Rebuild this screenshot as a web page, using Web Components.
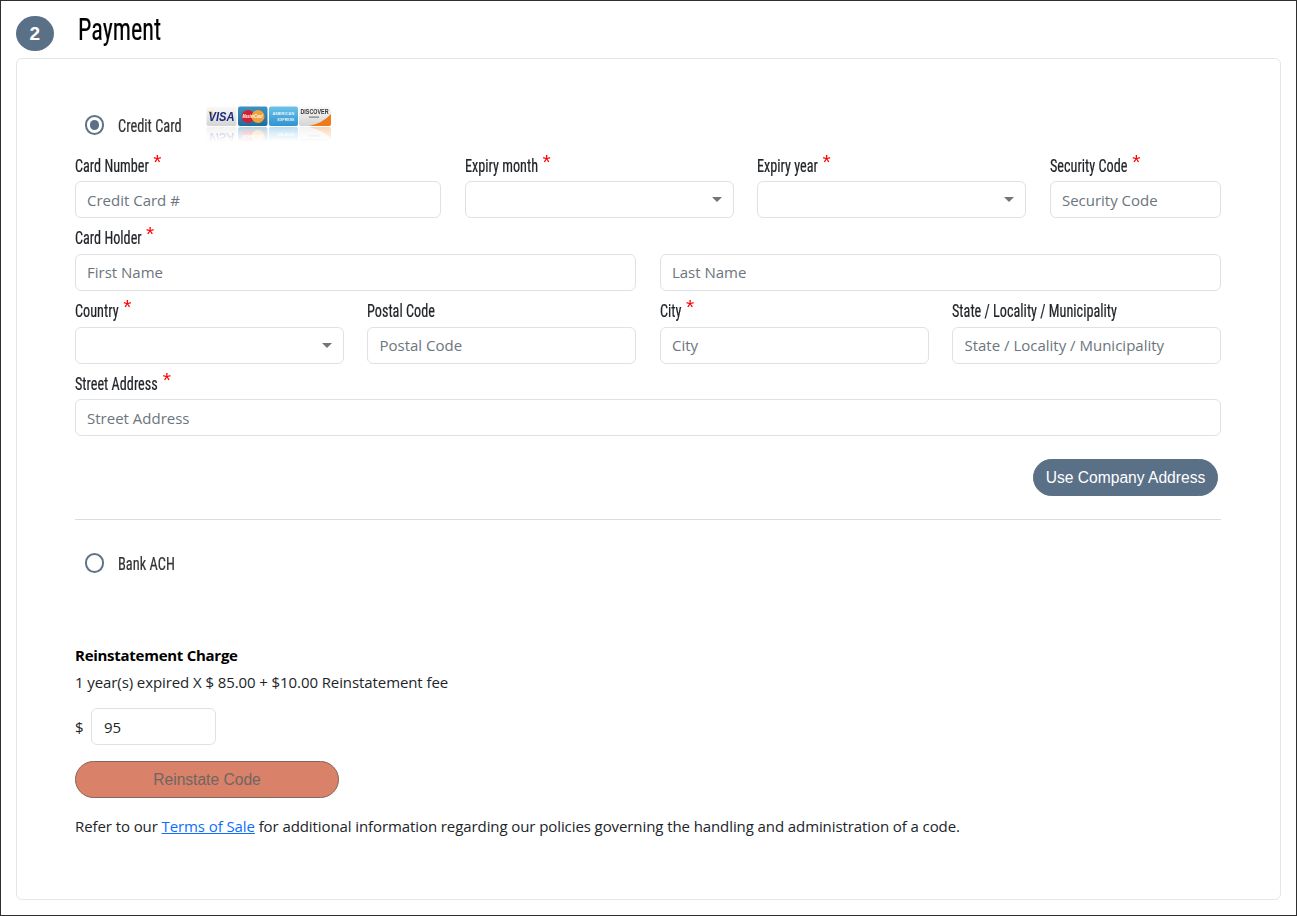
<!DOCTYPE html>
<html lang="en">
<head>
<meta charset="utf-8">
<title>Payment</title>
<style>
html,body{margin:0;padding:0;background:#fff}
body{width:1297px;height:916px;box-sizing:border-box;border:1px solid #2f2f2f;overflow:hidden;font-family:"Open Sans","Noto Sans",sans-serif;color:#212529}
</style>
</head>
<body>
<pay-section number="2" heading="Payment">
  <pay-option label="Credit Card" checked>
    <card-logos></card-logos>
  </pay-option>
  <field-grid>
    <form-field style="grid-column:span 4" label="Card Number" required placeholder="Credit Card #"></form-field>
    <form-field style="grid-column:span 3" label="Expiry month" required select></form-field>
    <form-field style="grid-column:span 3" label="Expiry year" required select></form-field>
    <form-field style="grid-column:span 2" label="Security Code" required placeholder="Security Code"></form-field>
    <form-field style="grid-column:span 6" label="Card Holder" required placeholder="First Name"></form-field>
    <form-field style="grid-column:span 6" nolabel placeholder="Last Name"></form-field>
    <form-field style="grid-column:span 3" label="Country" required select></form-field>
    <form-field style="grid-column:span 3" label="Postal Code" placeholder="Postal Code"></form-field>
    <form-field style="grid-column:span 3" label="City" required placeholder="City"></form-field>
    <form-field style="grid-column:span 3" label="State / Locality / Municipality" placeholder="State / Locality / Municipality"></form-field>
    <form-field style="grid-column:span 12" label="Street Address" required placeholder="Street Address"></form-field>
  </field-grid>
  <address-action><pill-button>Use Company Address</pill-button></address-action>
  <pay-option label="Bank ACH" class="ach"></pay-option>
  <reinstate-summary></reinstate-summary>
</pay-section>
<script>
function def(name, css, html, init){
  customElements.define(name, class extends HTMLElement{
    constructor(){super();const r=this.attachShadow({mode:'open'});r.innerHTML='<style>'+css+'</style>'+(typeof html==='function'?html(this):html);}
    connectedCallback(){
      if(this._done)return;this._done=true;
      if(typeof init==='function')init(this,this.shadowRoot);
    }
  });
}
const COND='"Roboto Condensed","Liberation Sans",sans-serif';
const BODY='"Open Sans","Noto Sans",sans-serif';
const NARROW='display:inline-block;transform-origin:0 50%;white-space:nowrap;-webkit-text-stroke:.2px currentColor;';

def('pay-section',`
:host{display:block;padding:0 15px 0 15px;box-sizing:border-box}
header{display:flex;align-items:flex-start;height:57px}
.badge{width:37.5px;height:35px;margin-top:15px;border-radius:50%;background:#5a7087;color:#fff;display:flex;align-items:center;justify-content:center;font:700 19px "Liberation Sans",sans-serif;flex:none}
h2{margin:10px 0 0 24.500px;font:400 31px/38px ${COND};color:#000}
h2 span{${NARROW}transform:scaleX(.78)}
.card{height:842px;box-sizing:border-box;border:1px solid #e6e6e6;border-radius:6px;padding:0 59px 0 58px}
`,`<header><div class="badge"></div><h2><span></span></h2></header><div class="card"><slot></slot></div>`,
(el,r)=>{r.querySelector('.badge').textContent=el.getAttribute('number');r.querySelector('h2 span').textContent=el.getAttribute('heading');});

def('pay-option',`
:host{display:flex;align-items:center;height:38px;padding-left:9.500px;position:relative}
:host(.ach){margin-top:24px}
:host(:not(.ach)){margin-top:47px}
.radio{width:19.500px;height:19.500px;box-sizing:border-box;border-radius:50%;border:2px solid #5f7388;display:flex;align-items:center;justify-content:center;flex:none}
.dot{width:9.500px;height:9.500px;border-radius:50%;background:#5a7087;display:none}
:host([checked]) .dot{display:block}
label{margin-left:14px;width:65px;padding-top:1px;font:400 18px/22px ${COND};color:#333;flex:none}
label span{${NARROW}transform:scaleX(.8)}
`,`<div class="radio"><div class="dot"></div></div><label><span></span></label><slot></slot>`,
(el,r)=>{r.querySelector('label span').textContent=el.getAttribute('label');});

def('card-logos',`
:host{display:block;margin-left:23px;align-self:flex-start;width:126px;height:36px}
svg{display:block;filter:blur(.35px)}
text{font-family:"Liberation Sans",sans-serif}
`,`<svg width="126" height="36" viewBox="0 0 126 36" aria-label="Accepted cards">
<defs>
<linearGradient id="g1" x1="0" y1="0" x2="0" y2="1"><stop offset="0" stop-color="#fafafa"/><stop offset="1" stop-color="#d4d4d4"/></linearGradient>
<linearGradient id="g2" x1="0" y1="0" x2="0" y2="1"><stop offset="0" stop-color="#3f93c0"/><stop offset="1" stop-color="#1d6c9f"/></linearGradient>
<linearGradient id="g3" x1="0" y1="0" x2="0" y2="1"><stop offset="0" stop-color="#6cc3ea"/><stop offset="1" stop-color="#2f94d0"/></linearGradient>
<linearGradient id="fade" x1="0" y1="0" x2="0" y2="1"><stop offset="0" stop-color="#fff" stop-opacity=".34"/><stop offset="1" stop-color="#fff" stop-opacity="0"/></linearGradient>
<mask id="m"><rect x="0" y="20" width="126" height="16" fill="url(#fade)"/></mask>
<g id="cards">
  <rect x="0.5" y="0.5" width="30" height="19.500" rx="2" fill="url(#g1)"/>
  <path d="M2 5.500 L6 5.500 L7 10 Z" fill="#e8a02a"/>
  <text x="15.500" y="14.500" text-anchor="middle" font-size="12.500" font-weight="700" font-style="italic" fill="#1a2a78" textLength="26" lengthAdjust="spacingAndGlyphs">VISA</text>
  <rect x="32" y="0.5" width="29.500" height="19.500" rx="2" fill="url(#g2)"/>
  <circle cx="42" cy="10.500" r="6.500" fill="#d2202c"/><circle cx="52" cy="10.500" r="6.500" fill="#f2a23a"/>
  <text x="46.500" y="12" text-anchor="middle" font-size="4.500" font-weight="700" font-style="italic" fill="#fff" textLength="20" lengthAdjust="spacingAndGlyphs">MasterCard</text>
  <rect x="63" y="0.5" width="29" height="19.500" rx="2" fill="url(#g3)"/>
  <text x="77.500" y="8.500" text-anchor="middle" font-size="4" font-weight="700" fill="#e8f6fc" textLength="22" lengthAdjust="spacingAndGlyphs">AMERICAN</text>
  <text x="80" y="14.500" text-anchor="middle" font-size="4" font-weight="700" fill="#e8f6fc" textLength="17" lengthAdjust="spacingAndGlyphs">EXPRESS</text>
  <rect x="93" y="0.5" width="32" height="19.500" rx="2" fill="url(#g1)"/>
  <path d="M125 8 V18 a2 2 0 0 1 -2 2 H103 Q117 17 125 8 Z" fill="#ee7a1a"/>
  <text x="108.500" y="8" text-anchor="middle" font-size="6.500" font-weight="700" fill="#333" textLength="28" lengthAdjust="spacingAndGlyphs">DISCOVER</text>
  <rect x="103" y="10.500" width="10" height="1.300" fill="#888"/>
</g>
</defs>
<use href="#cards"/>
<g mask="url(#m)"><use href="#cards" transform="translate(0,41) scale(1,-1)"/></g>
</svg>`);

def('field-grid',`
:host{display:grid;grid-template-columns:repeat(12,1fr);column-gap:23.900px;margin-top:1px}
`,`<slot></slot>`);

def('form-field',`
:host{display:block;min-width:0;height:72.750px;box-sizing:border-box}
.lab{height:36px;box-sizing:border-box;padding-top:9.600px;font:400 18px/22px ${COND};color:#212529;white-space:nowrap}
.lab .t{${NARROW}transform:scaleX(.79)}
.req{display:inline-block;color:#f00;font:400 21px/10px "Liberation Sans",sans-serif;margin-left:6px;position:relative;top:-3px;transform:scaleX(1.27);transform-origin:0 50%;-webkit-text-stroke:0}
.box{height:37px;box-sizing:border-box;position:relative}
input,select{width:100%;height:37px;box-sizing:border-box;border:1px solid #dee2e6;border-radius:6px;background:#fff;padding:0 11px;font:400 15px ${BODY};color:#212529;outline:none;appearance:none;margin:0;display:block}
input::placeholder{color:#6c757d;opacity:1}
.caret{position:absolute;right:12px;top:16px;width:0;height:0;border-left:5px solid transparent;border-right:5px solid transparent;border-top:5px solid #757575}
`,el=>{
  const lab=el.getAttribute('label')||'', nol=el.hasAttribute('nolabel');
  const req=el.hasAttribute('required')?'<span class="req">*</span>':'';
  const labHtml=`<div class="lab">${nol?'':'<span class="t">'+lab+req+'</span>'}</div>`;
  const ctl=el.hasAttribute('select')?'<select aria-label="'+lab+'"></select><span class="caret"></span>':`<input type="text" placeholder="${el.getAttribute('placeholder')||''}">`;
  return labHtml+'<div class="box">'+ctl+'</div>';
});

def('address-action',`
:host{display:flex;justify-content:flex-end;padding:23px 3px 23px 0;border-bottom:1px solid #dcdcdc}
`,`<slot></slot>`);

def('pill-button',`
:host{display:inline-block}
button{width:185px;height:37px;padding:0;border:1px solid #5a7087;border-radius:19px;background:#5a7087;color:#fff;font:400 15.600px "Liberation Sans",sans-serif;margin:0;display:block}
`,`<button><slot></slot></button>`);

def('reinstate-summary',`
:host{display:block;margin-top:62px;font:400 15px/22px ${BODY};color:#212529;letter-spacing:-.09px}
h3{margin:0;font:700 15px/22px ${BODY};color:#000;letter-spacing:-.27px}
p{margin:0}
.desc{margin-top:5px}
.amt{display:flex;align-items:center;margin-top:15px;height:37px}
.amt span{width:16px;flex:none}
.amt input{width:125px;height:37px;box-sizing:border-box;border:1px solid #dee2e6;border-radius:6px;padding:0 12px;font:400 15px ${BODY};color:#212529;outline:none;margin:0}
.go{display:block;width:264px;height:37px;margin-top:16px;border:1px solid #86675d;border-radius:19px;background:#d98169;color:#6e6661;font:400 15.600px "Liberation Sans",sans-serif;padding:0;letter-spacing:0}
.terms{margin-top:17px}
a{color:#0d6efd;text-decoration:underline}
`,`<h3>Reinstatement Charge</h3>
<p class="desc">1 year(s) expired X $ 85.00 + $10.00 Reinstatement fee</p>
<div class="amt"><span>$</span><input type="text" value="95" aria-label="Amount"></div>
<button class="go" disabled>Reinstate Code</button>
<p class="terms">Refer to our <a href="#">Terms of Sale</a> for additional information regarding our policies governing the handling and administration of a code.</p>`);
</script>
</body>
</html>
